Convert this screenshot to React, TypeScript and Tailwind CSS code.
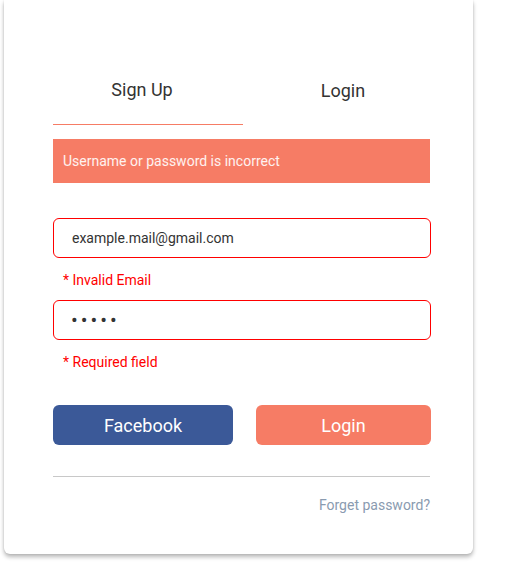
import React, { useState } from "react";

const SALMON = "bg-[#f67c65]";

export default function App() {
  const [email, setEmail] = useState("example.mail@gmail.com");
  const [password, setPassword] = useState("12345");

  return (
    <div className="min-h-screen bg-white font-['Roboto',_'Liberation_Sans',_sans-serif]">
      <div className="ml-[4px] w-[469px] rounded-b-md bg-white px-[49px] pt-[78px] pb-[39px] shadow-[0_3px_4px_rgba(0,0,0,0.28),0_0_2px_rgba(0,0,0,0.12)]">
        {/* tabs */}
        <div className="flex w-[377px]">
          <button className="w-[190px] border-b border-[#f67c65] pr-[12px] pb-[22px] text-center text-[18px] leading-[24px] text-[#333]">
            Sign Up
          </button>
          <button className="flex-1 pb-[22px] pl-[13px] text-center text-[18px] leading-[24px] text-[#333]">
            Login
          </button>
        </div>

        {/* error banner */}
        <div className={`mt-[14px] flex h-[44px] w-[377px] items-center px-[10px] text-[14px] text-white/90 ${SALMON}`}>
          Username or password is incorrect
        </div>

        <form className="flex w-[378px] flex-col" onSubmit={(e) => e.preventDefault()}>
          <input
            type="email"
            value={email}
            onChange={(e) => setEmail(e.target.value)}
            className="mt-[35px] h-[40px] w-full rounded-md border border-[#ff0000] px-[18px] text-[14px] text-[#333] outline-none"
          />
          <p className="mt-[12px] pl-[10px] text-[14px] leading-[20px] text-[#ff0000]">* Invalid Email</p>

          <input
            type="password"
            value={password}
            onChange={(e) => setPassword(e.target.value)}
            className="mt-[10px] h-[40px] w-full rounded-md border border-[#ff0000] px-[17px] text-[20px] tracking-[3px] text-[#333] outline-none"
          />
          <p className="mt-[12px] pl-[10px] text-[14px] leading-[20px] text-[#ff0000]">* Required field</p>

          <div className="mt-[33px] flex gap-[23px]">
            <button type="button" className="h-[40px] w-[180px] rounded-md bg-[#3b5998] text-[18px] text-white">
              Facebook
            </button>
            <button type="submit" className={`h-[40px] w-[175px] rounded-md text-[18px] text-white ${SALMON}`}>
              Login
            </button>
          </div>
        </form>

        <div className="mt-[31px] w-[377px] border-t border-[#c8c8c8]" />
        <div className="mt-[18px] w-[377px] text-right text-[14px] leading-[20px] text-[#8a9bb0]">
          Forget password?
        </div>
      </div>
    </div>
  );
}
